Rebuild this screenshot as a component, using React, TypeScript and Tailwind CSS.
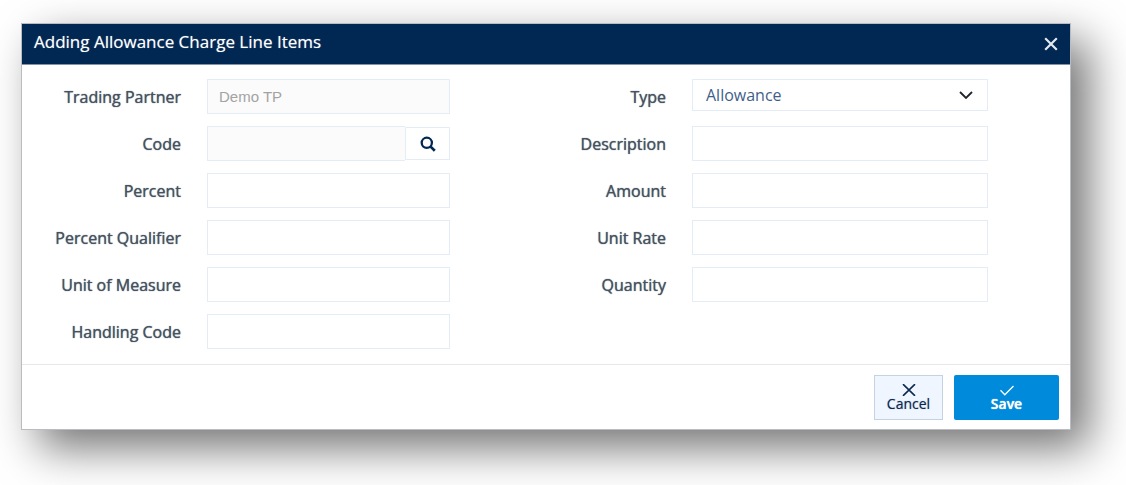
import { useState } from 'react';

interface FieldProps {
  id: string;
  label: string;
}

const labelClass = 'pr-[26px] text-right text-base font-medium text-[#475261] [text-shadow:0_0_1px_currentColor]';
const inputClass = 'h-[35px] w-full min-w-0 border border-[#e4ecf5] bg-white px-[11px] text-[#3f5f8a] outline-none disabled:bg-[#fbfbfb] disabled:text-[#a3a3a3]';

const leftFields: FieldProps[] = [
  { id: 'percent', label: 'Percent' },
  { id: 'percentQualifier', label: 'Percent Qualifier' },
  { id: 'unitOfMeasure', label: 'Unit of Measure' },
  { id: 'handlingCode', label: 'Handling Code' }
];

const rightFields: FieldProps[] = [
  { id: 'description', label: 'Description' },
  { id: 'amount', label: 'Amount' },
  { id: 'unitRate', label: 'Unit Rate' },
  { id: 'quantity', label: 'Quantity' }
];

const App = () => {
  const [values, setValues] = useState<Record<string, string>>({});
  const [type, setType] = useState('allowance');

  const renderField = ({ id, label }: FieldProps) => (
    <div key={id} className="contents">
      <label htmlFor={id} className={labelClass}>{label}</label>
      <input
        id={id}
        type="text"
        value={values[id] ?? ''}
        onChange={(e) => setValues({ ...values, [id]: e.target.value })}
        className={inputClass}
      />
    </div>
  );

  return (
    <div className="min-h-screen bg-white pt-[23px] pr-[55px] pb-[55px] pl-[21px] font-['Open_Sans',sans-serif]">
      <form
        role="dialog"
        aria-labelledby="dialog-title"
        onSubmit={(e) => e.preventDefault()}
        className="border border-[#b9bcc0] bg-white shadow-[18px_18px_42px_rgba(0,0,0,0.55)]"
      >
        <header className="flex h-[41px] items-center justify-between border-b border-[#8493a9] bg-[#002853] px-3 text-white">
          <h1 id="dialog-title" className="pb-1 text-[17px] font-medium [text-shadow:0_0_1px_#ffffff80]">Adding Allowance Charge Line Items</h1>
          <button type="button" aria-label="Close" className="text-[#e3e8ee]">
            <svg width="14" height="14" viewBox="0 0 14 14" fill="none" stroke="currentColor" strokeWidth="2.2">
              <path d="M1.2 1.2 12.8 12.8M12.8 1.2 1.2 12.8" />
            </svg>
          </button>
        </header>

        <div className="grid grid-cols-[428fr_538fr_82fr] pt-[14px] pb-[15px]">
          <div className="grid auto-rows-[35px] grid-cols-[185fr_243fr] content-start items-center gap-y-3">
            <label htmlFor="tradingPartner" className={labelClass}>Trading Partner</label>
            <input
              id="tradingPartner"
              type="text"
              value="Demo TP"
              disabled
              className={`${inputClass} font-['Liberation_Sans',sans-serif] text-[15px]`}
            />

            <label htmlFor="code" className={labelClass}>Code</label>
            <div className="flex items-center">
              <input id="code" type="text" disabled className={`${inputClass} border-r-0`} />
              <button
                type="button"
                aria-label="Search codes"
                className="flex h-[33px] w-[45px] shrink-0 items-center justify-center border border-[#e4ecf5] bg-white text-[#002853]"
              >
                <svg width="16" height="16" viewBox="0 0 16 16" fill="none" stroke="currentColor">
                  <circle cx="6.8" cy="6.8" r="5.1" strokeWidth="2.3" />
                  <path d="m10.6 10.6 4.2 4.2" strokeWidth="2.7" />
                </svg>
              </button>
            </div>

            {leftFields.map(renderField)}
          </div>

          <div className="grid auto-rows-[35px] grid-cols-[242fr_296fr] content-start items-center gap-y-3">
            <label htmlFor="type" className={labelClass}>Type</label>
            <div className="relative self-start">
              <select
                id="type"
                value={type}
                onChange={(e) => setType(e.target.value)}
                className="block h-8 w-full appearance-none border border-[#e4ecf5] bg-white px-[13px] text-base text-[#3f5f8a] outline-none"
              >
                <option value="allowance">Allowance</option>
                <option value="charge">Charge</option>
              </select>
              <svg
                width="14"
                height="8"
                viewBox="0 0 14 8"
                fill="none"
                stroke="#20242c"
                strokeWidth="1.8"
                className="pointer-events-none absolute top-3 right-[15px]"
              >
                <path d="m1 1 6 6 6-6" />
              </svg>
            </div>

            {rightFields.map(renderField)}
          </div>
        </div>

        <footer className="flex justify-end gap-[11px] border-t border-[#e5e7ea] pt-[10px] pr-[11px] pb-[9px]">
          <button
            type="button"
            className="flex h-[45px] w-[69px] flex-col items-center justify-center border border-[#c5d2e0] bg-[#eff6ff] text-sm leading-4 font-medium text-[#0b2850] [text-shadow:0_0_1px_#0b285080]"
          >
            <svg width="14" height="12" viewBox="0 0 14 12" fill="none" stroke="currentColor" strokeWidth="1.7">
              <path d="M1 0.2 13 11.8M13 0.2 1 11.8" />
            </svg>
            Cancel
          </button>
          <button
            type="submit"
            className="flex h-[45px] w-[105px] flex-col items-center justify-center rounded-xs bg-[#008adb] text-sm leading-4 font-semibold text-white [text-shadow:0_0_1px_#ffffff]"
          >
            <svg width="14" height="12" viewBox="0 0 14 12" fill="none" stroke="currentColor" strokeWidth="1.3">
              <path d="m0.5 6.3 4.3 4.5L13.5 2" />
            </svg>
            Save
          </button>
        </footer>
      </form>
    </div>
  );
};

export default App;
